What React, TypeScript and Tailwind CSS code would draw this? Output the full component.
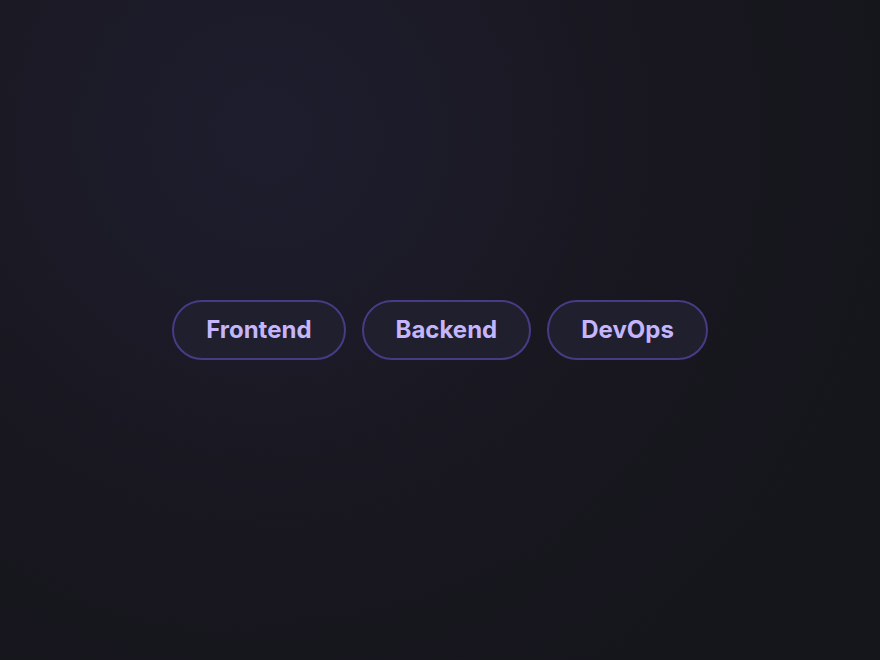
const tags = ['Frontend', 'Backend', 'DevOps']

export default function App() {
  return (
    <div
      className="flex h-[660px] w-full items-center justify-center bg-[#15151c] bg-[radial-gradient(circle_at_30%_20%,#1e1d2e_0%,#18171f_50%,#15151c_80%)]"
      style={{ fontFamily: 'Inter, "Noto Sans", sans-serif' }}
    >
      <div className="flex items-center gap-4">
        {tags.map((tag) => (
          <button
            key={tag}
            className="rounded-full border-2 border-[#463c85] bg-[#201f2e] px-8 py-[14px] text-2xl font-bold leading-7 text-[#c4b5fd]"
          >
            {tag}
          </button>
        ))}
      </div>
    </div>
  )
}
